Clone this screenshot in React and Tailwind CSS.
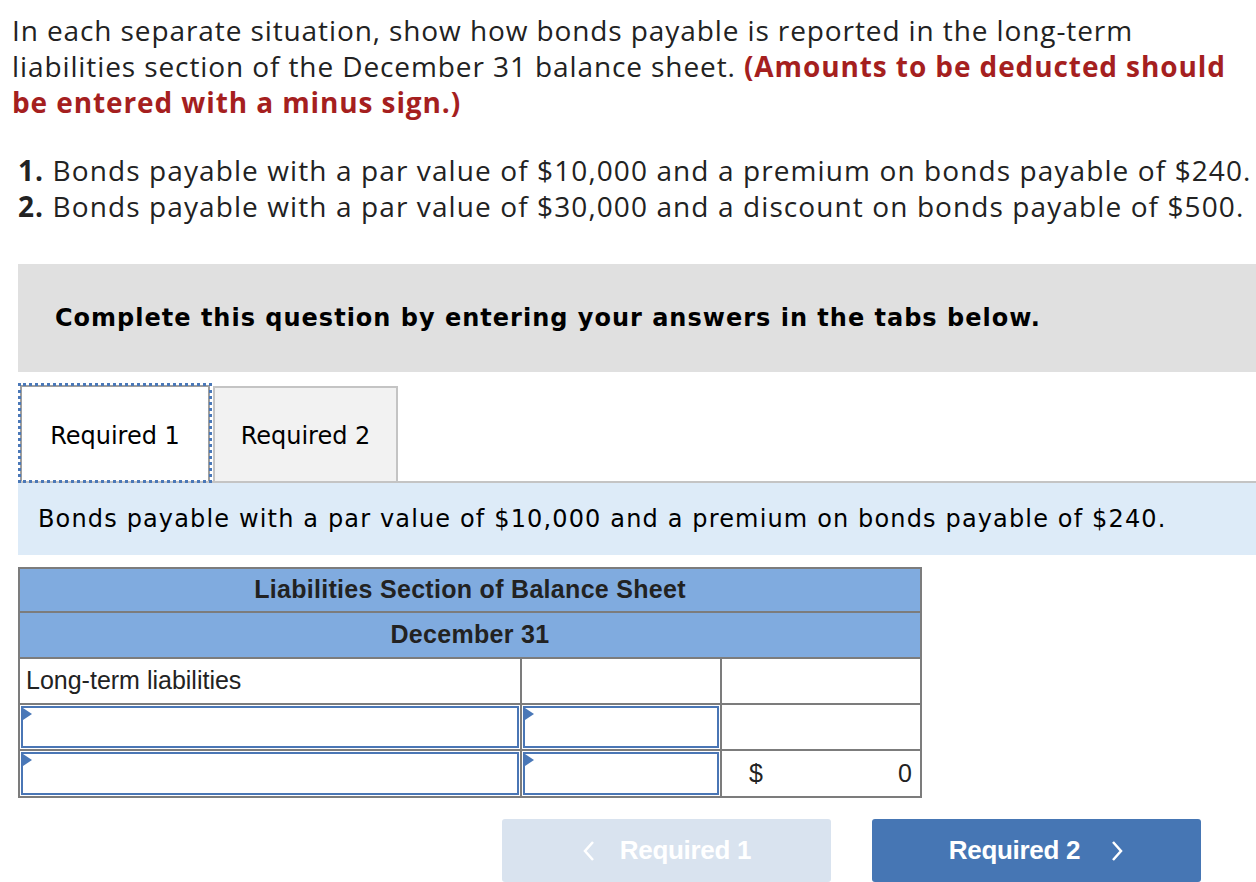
import React from 'react'

const Flag = () => (
  <span className="absolute left-0 top-0 w-0 h-0 border-y-[6px] border-y-transparent border-l-[9px] border-l-[#4a78b8]" />
)

function InputCell({ className = '' }) {
  return (
    <div className={`relative border-2 border-[#4a76b5] m-[1px] ${className}`}>
      <Flag />
    </div>
  )
}

export default function App() {
  return (
    <div className="w-[1256px] h-[882px] bg-white overflow-hidden text-[#222]">
      {/* Prompt */}
      <div className="pl-3 pt-[12px] font-['Open_Sans',sans-serif] text-[28px] leading-[36px] tracking-[0.9px] text-[#222] whitespace-nowrap">
        <p>
          In each separate situation, show how bonds payable is reported in the long-term<br />
          liabilities section of the December 31 balance sheet.{' '}
          <span className="font-bold text-[#a51f1f]">(Amounts to be deducted should<br />be entered with a minus sign.)</span>
        </p>
      </div>

      <ol className="pl-[18px] pt-[32px] font-['Open_Sans',sans-serif] text-[28px] leading-[36px] tracking-[1.1px] whitespace-nowrap">
        <li><span className="font-bold">1.</span> Bonds payable with a par value of $10,000 and a premium on bonds payable of $240.</li>
        <li><span className="font-bold">2.</span> Bonds payable with a par value of $30,000 and a discount on bonds payable of $500.</li>
      </ol>

      {/* Instruction box */}
      <div className="ml-[18px] mt-[40px] h-[108px] bg-[#e0e0e0] flex items-center pl-[37px] font-['DejaVu_Sans',sans-serif] font-bold text-[24px] tracking-[1px] text-black">
        Complete this question by entering your answers in the tabs below.
      </div>

      {/* Tabs */}
      <div className="ml-[18px] mt-[13px] flex items-end border-b-2 border-[#c4c4c4] h-[98px] font-['DejaVu_Sans',sans-serif] text-[24px] text-black">
        <div className="h-[100px] -mb-[2px] p-[2px] outline-dotted outline-[3px] outline-[#4a78b8] -outline-offset-[3px]">
          <div className="h-full w-[190px] bg-white border-2 border-b-0 border-[#9e9e9e] flex items-center justify-center pt-[4px]">
            Required 1
          </div>
        </div>
        <div className="h-[95px] w-[185px] ml-[1px] bg-[#f2f2f2] border-2 border-b-0 border-[#c4c4c4] flex items-center justify-center pt-[2px]">
          Required 2
        </div>
      </div>

      <div className="ml-[18px] h-[72px] bg-[#ddebf8] flex items-center pl-[20px] font-['DejaVu_Sans',sans-serif] text-[24px] tracking-[1.15px] text-black whitespace-nowrap">
        Bonds payable with a par value of $10,000 and a premium on bonds payable of $240.
      </div>

      {/* Table */}
      <div className="ml-[18px] mt-[12px] w-[904px] border-2 border-[#7c7c7c] font-['Liberation_Sans',Arial,sans-serif] text-[25px] text-[#222]">
        <div className="h-[44px] bg-[#80abdf] border-b-2 border-[#7c7c7c] flex items-center justify-center font-bold tracking-[0.3px]">
          Liabilities Section of Balance Sheet
        </div>
        <div className="h-[46px] bg-[#80abdf] border-b-2 border-[#7c7c7c] flex items-center justify-center font-bold tracking-[0.3px]">
          December 31
        </div>
        <div className="grid grid-cols-[502px_200px_1fr]">
          <div className="h-[46px] border-r-2 border-b-2 border-[#7c7c7c] flex items-center pl-[6px]">Long-term liabilities</div>
          <div className="h-[46px] border-r-2 border-b-2 border-[#7c7c7c]" />
          <div className="h-[46px] border-b-2 border-[#7c7c7c]" />

          <div className="h-[46px] border-r-2 border-b-2 border-[#7c7c7c] flex"><InputCell className="flex-1" /></div>
          <div className="h-[46px] border-r-2 border-b-2 border-[#7c7c7c] flex"><InputCell className="flex-1" /></div>
          <div className="h-[46px] border-b-2 border-[#7c7c7c]" />

          <div className="h-[45px] border-r-2 border-[#7c7c7c] flex"><InputCell className="flex-1" /></div>
          <div className="h-[45px] border-r-2 border-[#7c7c7c] flex"><InputCell className="flex-1" /></div>
          <div className="h-[45px] flex items-center justify-between pl-[27px] pr-[8px]">
            <span>$</span>
            <span>0</span>
          </div>
        </div>
      </div>

      {/* Nav buttons */}
      <div className="mt-[21px] flex pl-[502px] gap-[41px] font-['Liberation_Sans',Arial,sans-serif] font-bold text-[26px] text-white">
        <button className="w-[329px] h-[63px] rounded-[3px] bg-[#d9e3ef] flex items-center justify-center gap-[24px]">
          <svg width="14" height="24" viewBox="0 0 14 24" fill="none" stroke="white" strokeWidth="2.5"><path d="M11 3L3 12l8 9" /></svg>
          <span className="tracking-[-0.3px]">Required 1</span>
        </button>
        <button className="w-[329px] h-[63px] rounded-[3px] bg-[#4676b4] flex items-center justify-center gap-[30px]">
          <span className="tracking-[-0.3px]">Required 2</span>
          <svg width="14" height="24" viewBox="0 0 14 24" fill="none" stroke="white" strokeWidth="2.5"><path d="M3 3l8 9-8 9" /></svg>
        </button>
      </div>
    </div>
  )
}
